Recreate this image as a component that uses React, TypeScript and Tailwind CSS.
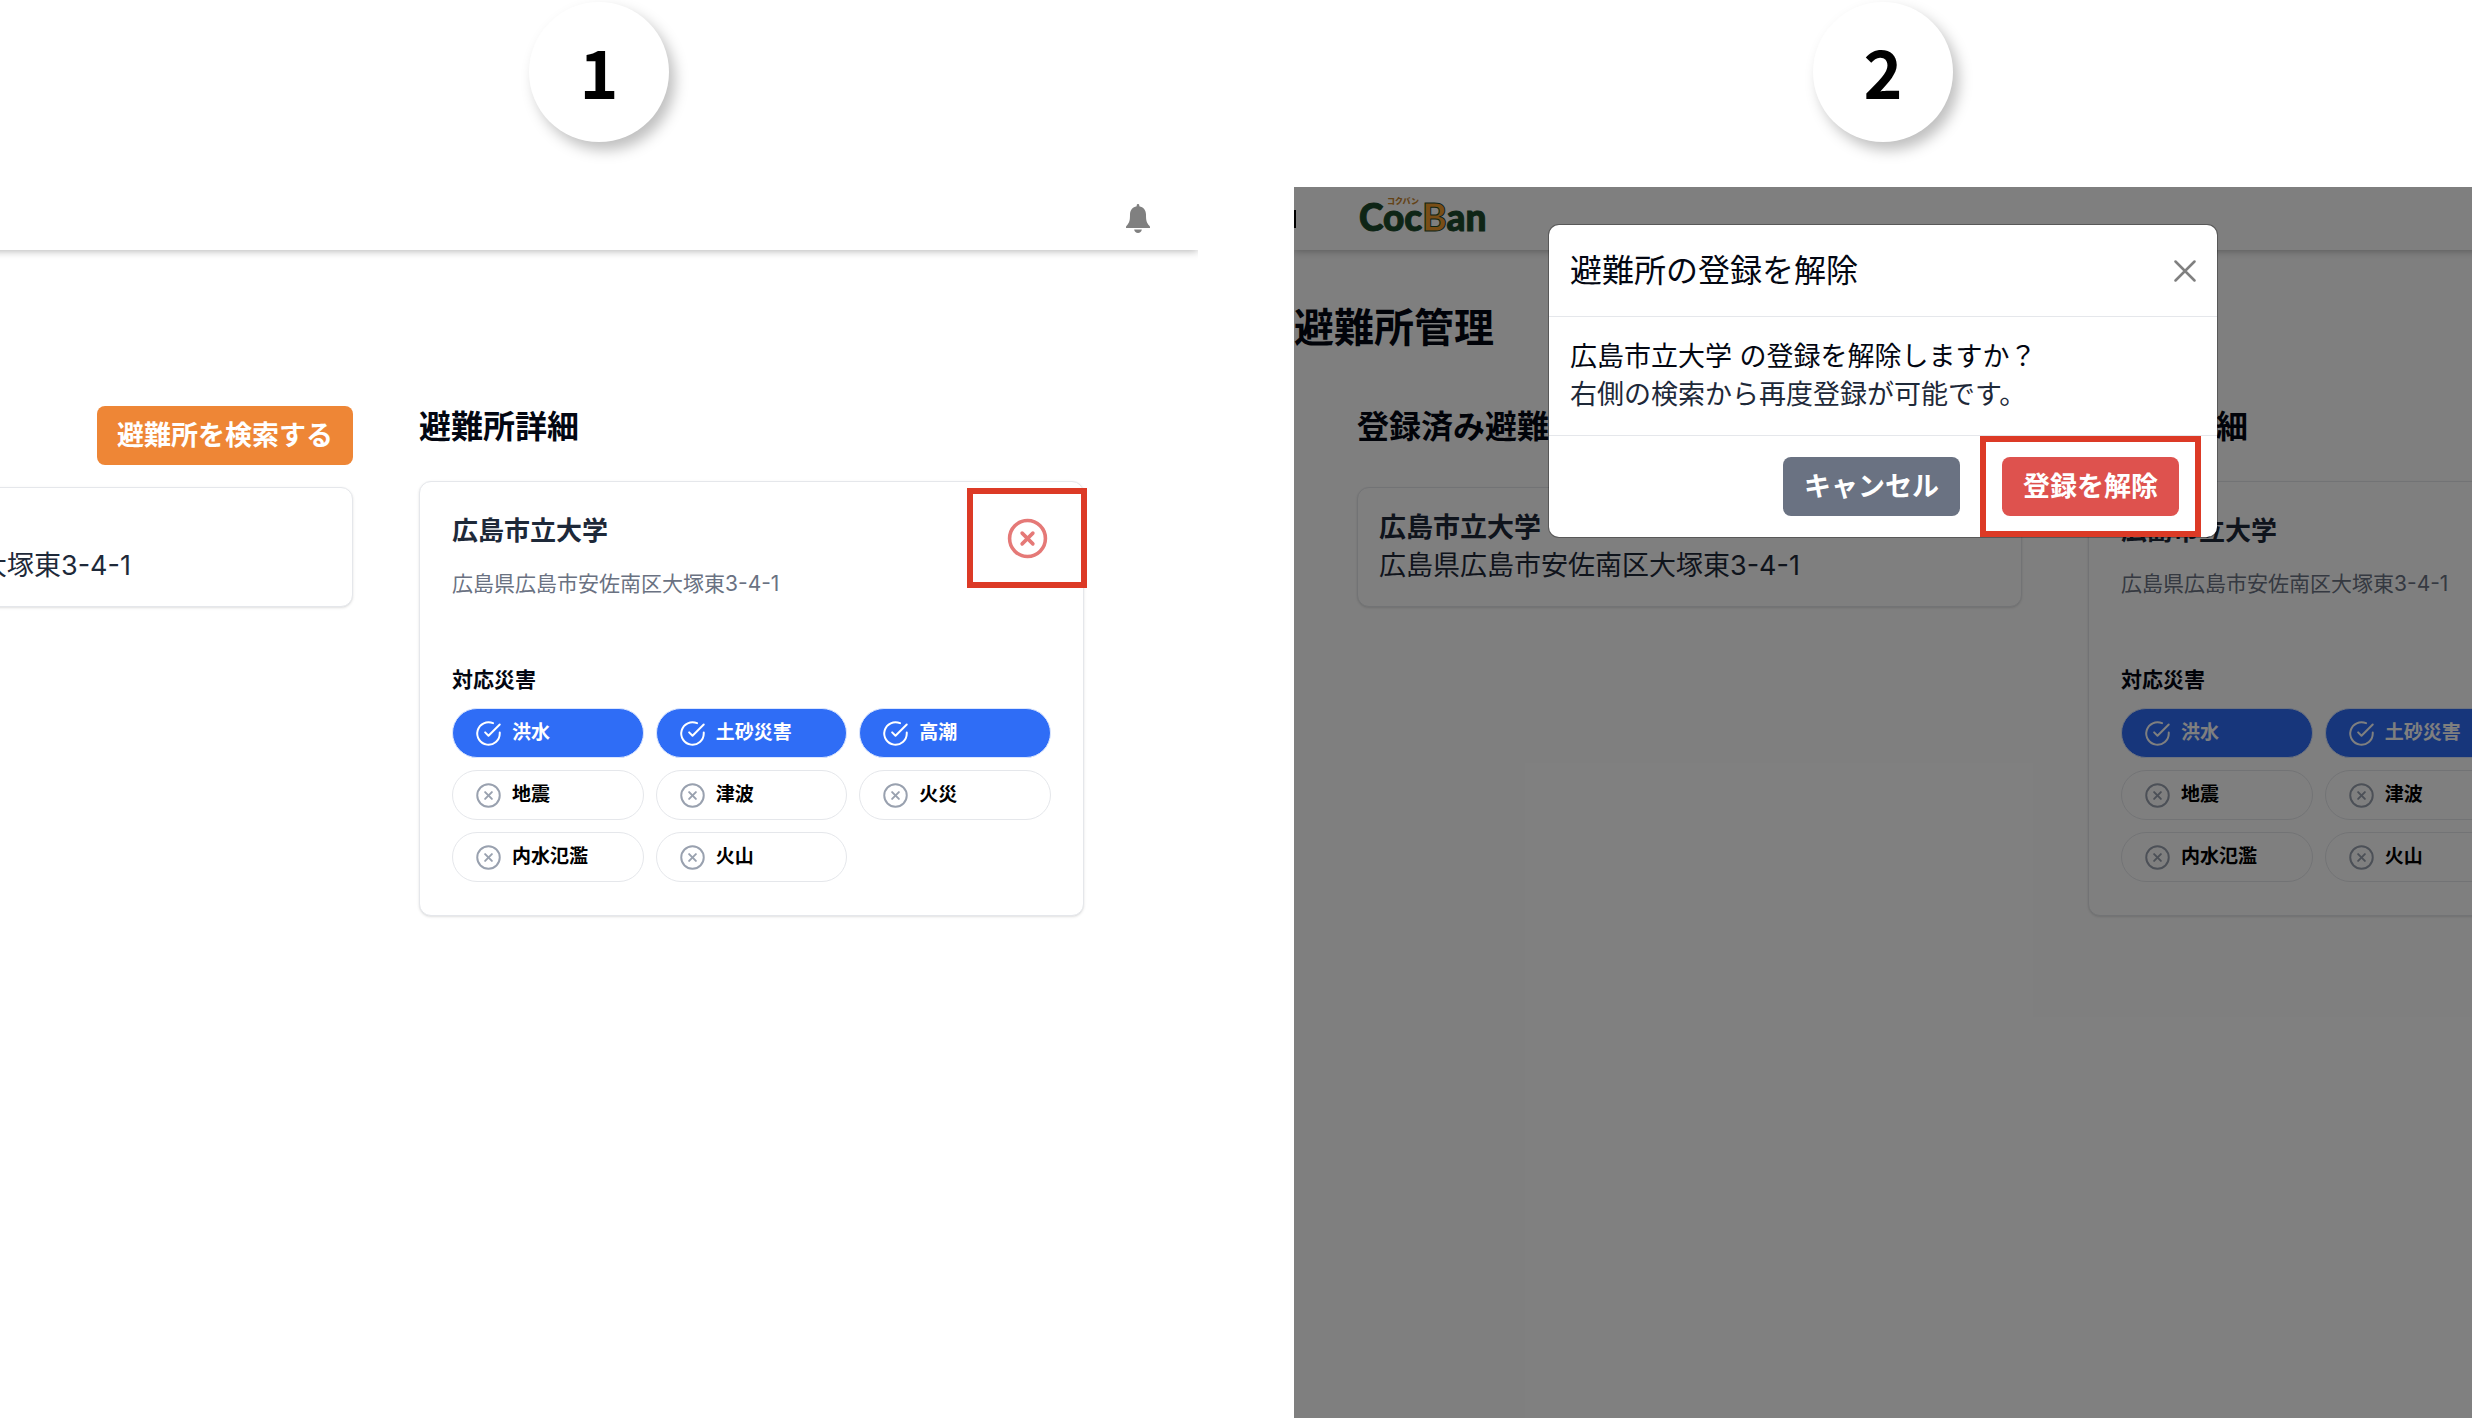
// 避難所の登録解除の手順 — 1: 解除ボタン / 2: 確認ダイアログ
import type { ReactNode } from 'react'
import { CircleX } from 'lucide-react'
import { FiCheckCircle, FiXCircle } from 'react-icons/fi'
import clsx from 'clsx'

interface Disaster {
  label: string
  supported: boolean
}

const SHELTER = {
  name: '広島市立大学',
  address: '広島県広島市安佐南区大塚東3-4-1',
}

const DISASTERS: Disaster[] = [
  { label: '洪水', supported: true },
  { label: '土砂災害', supported: true },
  { label: '高潮', supported: true },
  { label: '地震', supported: false },
  { label: '津波', supported: false },
  { label: '火災', supported: false },
  { label: '内水氾濫', supported: false },
  { label: '火山', supported: false },
]

function BellIcon() {
  return (
    <svg viewBox="0 0 24 29" className="h-[29px] w-6" fill="#808080" aria-hidden="true">
      <path d="M12 0c.8 0 1.3.6 1.3 1.4v.8C17.4 3 20 6.200 20 10.500c0 6 .6 8.400 3.400 11.200.5.500.6.900.6 1.600v.7H0v-.7c0-.7.1-1.100.6-1.600C3.400 18.900 4 16.500 4 10.500 4 6.200 6.600 3 10.700 2.200v-.8C10.700.6 11.200 0 12 0z" />
      <path d="M8.200 25.400h7.600c-.2 2.100-1.800 3.600-3.800 3.600s-3.600-1.500-3.800-3.600z" />
    </svg>
  )
}

function Logo() {
  return (
    <a
      href="#top"
      className="relative pb-1 font-[Lato,sans-serif] text-[37px] leading-10 font-black text-[#1d4a2c] [-webkit-text-stroke:1px_#1d4a2c]"
    >
      Coc
      <span className="text-[#f39c2c]">B</span>
      an
      <span className="absolute top-0 left-7 font-['Noto_Sans_CJK_JP',sans-serif] text-[8px] leading-2 font-black text-[#c8862f] [-webkit-text-stroke:0]">
        コクバン
      </span>
    </a>
  )
}

function Highlight({ className }: { className: string }) {
  return (
    <span
      className={clsx('pointer-events-none absolute border-[6px] border-[#dc3a26]', className)}
    />
  )
}

function DisasterChip({ label, supported }: Disaster) {
  return (
    <li
      className={clsx(
        'flex h-[50px] items-center gap-2.5 rounded-full border px-[22px] text-[19px] leading-6 font-bold',
        supported
          ? 'border-[#dbe6fe] bg-[#2f6df6] text-white'
          : 'border-gray-200 bg-white text-black',
      )}
    >
      {supported ? (
        <FiCheckCircle className="size-[27px] shrink-0 stroke-[1.75]" />
      ) : (
        <FiXCircle className="size-[27px] shrink-0 stroke-[1.75] text-gray-400" />
      )}
      {label}
    </li>
  )
}

function ShelterPage({ highlightRemove = false }: { highlightRemove?: boolean }) {
  return (
    <div className="w-[1573px] shrink-0">
      {/* ヘッダー */}
      <header className="flex h-[63px] items-center bg-white pr-12 shadow-[0_1px_8px_rgba(0,0,0,0.3)]">
        <span className="mr-[63px] h-[18px] w-0.5 bg-black" />
        <Logo />
        <button type="button" aria-label="通知" className="ml-auto">
          <BellIcon />
        </button>
      </header>

      <main>
        <h1 className="mt-[54px] text-[40px] leading-12 font-bold text-gray-950">避難所管理</h1>
        <div className="mt-[54px] grid grid-cols-2 items-start gap-[66px] pr-[114px] pl-[63px]">
          {/* 登録済み避難所 */}
          <section>
            <div className="flex items-start justify-between">
              <h2 className="text-[32px] leading-[42px] font-bold text-gray-950">登録済み避難所</h2>
              <button
                type="button"
                className="h-[59px] rounded-lg bg-[#ee8636] px-5 text-[27px] leading-[38px] font-bold text-white"
              >
                避難所を検索する
              </button>
            </div>
            <div className="mt-[22px] rounded-xl border border-gray-200 bg-white p-[21px] text-[27px] leading-[38px] text-gray-800 shadow-sm">
              <p className="font-bold">{SHELTER.name}</p>
              <p>{SHELTER.address}</p>
            </div>
          </section>

          {/* 避難所詳細 */}
          <section>
            <h2 className="text-[32px] leading-[42px] font-bold text-gray-950">避難所詳細</h2>
            <div className="mt-[33px] rounded-xl border border-gray-200 bg-white px-8 pt-8 pb-[33px] shadow-sm">
              <div className="flex items-start justify-between">
                <div>
                  <h3 className="text-[26px] leading-[34px] font-bold text-gray-800">
                    {SHELTER.name}
                  </h3>
                  <p className="mt-5 text-[21px] leading-8 text-gray-500">{SHELTER.address}</p>
                </div>
                <button
                  type="button"
                  aria-label="登録を解除"
                  className="relative flex h-12 w-12 items-center justify-center text-[#e57977]"
                >
                  <CircleX className="size-[43px]" />
                  {highlightRemove && <Highlight className="-inset-x-9 -inset-y-[26px]" />}
                </button>
              </div>
              <h4 className="mt-16 text-[21px] leading-8 font-bold text-gray-950">対応災害</h4>
              <ul className="mt-3 grid grid-cols-3 gap-3">
                {DISASTERS.map((d) => (
                  <DisasterChip key={d.label} {...d} />
                ))}
              </ul>
            </div>
          </section>
        </div>
      </main>
    </div>
  )
}

function RemoveDialog() {
  return (
    <div
      role="dialog"
      aria-labelledby="remove-title"
      className="w-[668px] rounded-[10px] bg-white shadow-[0_0_0_1px_rgba(0,0,0,0.3)]"
    >
      <div className="flex h-[91px] items-center justify-between px-[21px]">
        <h2 id="remove-title" className="text-[32px] leading-12 text-gray-950">
          避難所の登録を解除
        </h2>
        <button type="button" aria-label="閉じる">
          <svg
            viewBox="0 0 22 22"
            className="size-[22px]"
            fill="none"
            stroke="#808080"
            strokeWidth="2.5"
            strokeLinecap="round"
          >
            <path d="M1.500 1.500l19 19M20.500 1.500l-19 19" />
          </svg>
        </button>
      </div>
      <div className="border-y border-gray-200 px-[21px] py-[21px] text-[27px] leading-[38px]">
        <p className="text-gray-950">{SHELTER.name} の登録を解除しますか？</p>
        <p className="text-gray-800">右側の検索から再度登録が可能です。</p>
      </div>
      <div className="flex justify-end gap-[42px] py-[21px] pr-[38px] text-[27px] leading-[38px] font-bold text-white">
        <button type="button" className="h-[59px] rounded-lg bg-gray-500 px-[21px]">
          キャンセル
        </button>
        <button type="button" className="relative h-[59px] rounded-lg bg-[#de524e] px-[21px]">
          登録を解除
          <Highlight className="-inset-x-[22px] -inset-y-[21px]" />
        </button>
      </div>
    </div>
  )
}

function Step({ number, children }: { number: number; children: ReactNode }) {
  return (
    <section className="flex min-w-0 flex-col items-center">
      <div className="mt-0.5 mb-[45px] flex size-[140px] items-center justify-center rounded-full bg-white pb-1 font-['Noto_Sans_CJK_JP',sans-serif] text-[66px] leading-none font-bold text-black shadow-[6px_8px_14px_rgba(0,0,0,0.25)]">
        {number}
      </div>
      {children}
    </section>
  )
}

export default function App() {
  return (
    <div className="grid min-h-screen grid-cols-[1198fr_1178fr] gap-24 overflow-hidden bg-white font-[Inter,'Noto_Sans_CJK_JP',sans-serif]">
      <Step number={1}>
        <div className="flex w-full flex-1 justify-end overflow-hidden">
          <ShelterPage highlightRemove />
        </div>
      </Step>
      <Step number={2}>
        <div className="relative flex w-full flex-1 overflow-hidden">
          <ShelterPage />
          <div className="absolute inset-0 flex items-start justify-center bg-black/50 pt-[38px]">
            <RemoveDialog />
          </div>
        </div>
      </Step>
    </div>
  )
}
